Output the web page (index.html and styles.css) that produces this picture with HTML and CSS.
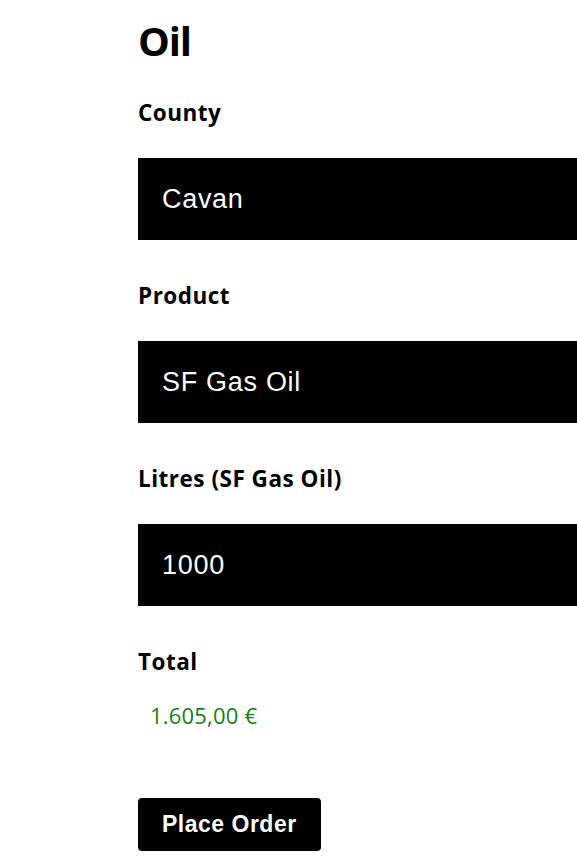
FILE: index.html
```html
<!DOCTYPE html>
<html>
<head>
<meta charset="utf-8">
<link rel="stylesheet" href="styles.css">
</head>
<body>
<div class="page">
  <h1 class="title">Oil</h1>
  <div class="label">County</div>
  <div class="field">Cavan</div>
  <div class="label">Product</div>
  <div class="field">SF Gas Oil</div>
  <div class="label">Litres (SF Gas Oil)</div>
  <div class="field">1000</div>
  <div class="label">Total</div>
  <div class="total">1.605,00 €</div>
  <div class="actions"><button class="btn">Place Order</button></div>
</div>
</body>
</html>
```
FILE: styles.css
```css
html, body {
  margin: 0;
  padding: 0;
  background: #fff;
  overflow: hidden;
}
.page {
  padding: 17px 0 0 138px;
  display: flex;
  flex-direction: column;
  align-items: flex-start;
  font-family: "Open Sans", sans-serif;
  color: #000;
}
.title {
  margin: 0;
  font-size: 40px;
  line-height: 48px;
  font-weight: 700;
  letter-spacing: -1.2px;
}
.label {
  font-size: 22.5px;
  line-height: 30px;
  font-weight: 700;
  letter-spacing: 0.5px;
  margin-top: 41px;
}
.title + .label {
  margin-top: 33px;
}
.field {
  margin-top: 30px;
  box-sizing: border-box;
  width: 439px;
  height: 82px;
  background: #000;
  color: #fff;
  display: flex;
  align-items: center;
  padding: 1px 0 0 24px;
  font-family: "Liberation Sans", Arial, sans-serif;
  font-size: 27px;
  letter-spacing: 0.7px;
}
.total {
  margin-top: 23px;
  padding-left: 12px;
  font-size: 22px;
  line-height: 30px;
  letter-spacing: 0.2px;
  color: #177d17;
}
.actions {
  margin-top: 68px;
}
.btn {
  height: 53px;
  padding: 0 24px;
  border: none;
  border-radius: 4px;
  background: #000;
  color: #fff;
  font-family: "Liberation Sans", Arial, sans-serif;
  font-weight: 700;
  font-size: 23px;
  letter-spacing: 0.5px;
  cursor: pointer;
}
```
